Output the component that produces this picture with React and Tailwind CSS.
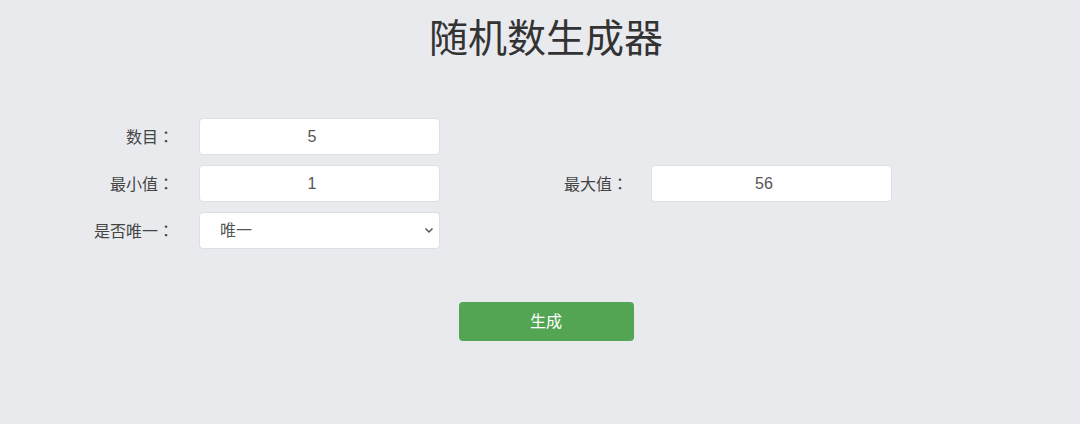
import { useState } from 'react';

const font = { fontFamily: '"Liberation Sans", "Noto Sans CJK SC", sans-serif' };

function Label({ text, className = '' }) {
  return (
    <label className={`shrink-0 text-right text-[16px] text-[#444] ${className}`}>
      {text}
      <span style={{ fontFamily: '"Noto Sans CJK JP", sans-serif' }}>：</span>
    </label>
  );
}

function Field({ value, onChange }) {
  return (
    <input
      type="text"
      value={value}
      onChange={(e) => onChange(e.target.value)}
      className="h-[37px] w-[241px] rounded-[4px] border border-[#dcdfe6] bg-white pr-[15px] text-center text-[16px] text-[#555] outline-none"
    />
  );
}

export default function App() {
  const [count, setCount] = useState('5');
  const [min, setMin] = useState('1');
  const [max, setMax] = useState('56');
  const [unique, setUnique] = useState('唯一');

  return (
    <div className="min-h-screen bg-[#e9eaee] pt-[15px]" style={font}>
      {/* Title */}
      <h1 className="h-[48px] pl-[12px] text-center text-[39px] leading-[48px] text-[#333]">
        随机数生成器
      </h1>

      {/* Form */}
      <div className="mt-[55px] flex flex-col gap-[10px]">
        <div className="flex h-[37px] items-center">
          <Label text="数目" className="w-[174px]" />
          <div className="ml-[25px]">
            <Field value={count} onChange={setCount} />
          </div>
        </div>

        <div className="flex h-[37px] items-center">
          <Label text="最小值" className="w-[174px]" />
          <div className="ml-[25px]">
            <Field value={min} onChange={setMin} />
          </div>
          <Label text="最大值" className="w-[188px]" />
          <div className="ml-[23px]">
            <Field value={max} onChange={setMax} />
          </div>
        </div>

        <div className="flex h-[37px] items-center">
          <Label text="是否唯一" className="w-[174px]" />
          <div className="relative ml-[25px]">
            <select
              value={unique}
              onChange={(e) => setUnique(e.target.value)}
              className="h-[37px] w-[241px] appearance-none rounded-[4px] border border-[#dcdfe6] bg-white pl-[20px] text-[16px] text-[#555] outline-none"
            >
              <option>唯一</option>
              <option>不唯一</option>
            </select>
            <svg
              className="pointer-events-none absolute right-[6px] top-[15px]"
              width="10"
              height="7"
              viewBox="0 0 10 7"
            >
              <path d="M1.5 1.5 L5 5 L8.5 1.5" fill="none" stroke="#555" strokeWidth="1.5" />
            </svg>
          </div>
        </div>
      </div>

      {/* Submit */}
      <div className="mt-[53px] flex justify-center pl-[12px]">
        <button className="h-[39px] w-[175px] rounded-[4px] bg-[#53a553] text-[16px] text-white">
          生成
        </button>
      </div>
    </div>
  );
}
